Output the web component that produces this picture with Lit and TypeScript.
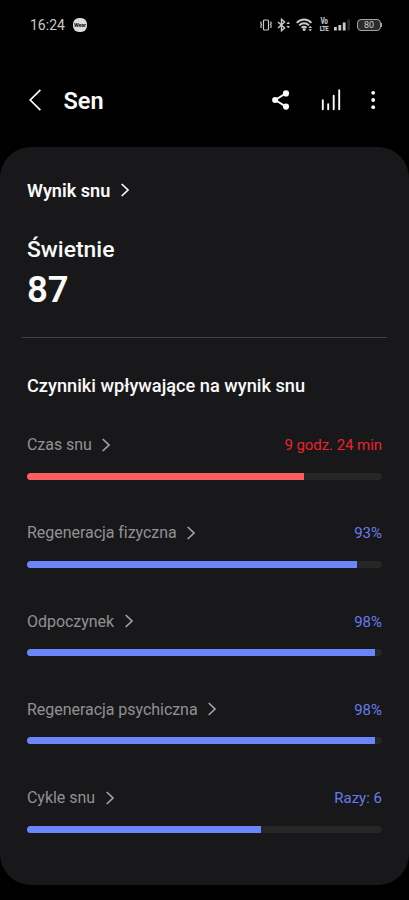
import { LitElement, html, css } from "lit";
import { customElement, property } from "lit/decorators.js";

interface Factor {
  name: string;
  value: string;
  percent: number;
  alert?: boolean;
}

const FACTORS: Factor[] = [
  { name: "Czas snu", value: "9 godz. 24 min", percent: 78, alert: true },
  { name: "Regeneracja fizyczna", value: "93%", percent: 93 },
  { name: "Odpoczynek", value: "98%", percent: 98 },
  { name: "Regeneracja psychiczna", value: "98%", percent: 98 },
  { name: "Cykle snu", value: "Razy: 6", percent: 66 },
];

const chevron = html`<svg width="10" height="14" viewBox="0 0 10 14" fill="none" stroke="currentColor" stroke-width="1.7">
  <path d="M1.7 1 L8 7 L1.7 13" />
</svg>`;

@customElement("status-bar")
export class StatusBar extends LitElement {
  static styles = css`
    :host {
      display: flex;
      align-items: center;
      height: 50px;
      padding: 0 26px 0 30px;
      color: #c9c9c9;
      font-size: 14px;
    }
    .time {
      width: 43px;
      line-height: 20px;
    }
    .wear {
      width: 14px;
      height: 14px;
      border-radius: 6px;
      background: #dcdcdc;
      color: #222;
      font-size: 5.5px;
      font-weight: 800;
      line-height: 14px;
      text-align: center;
      letter-spacing: -0.2px;
    }
    .icons {
      margin-left: auto;
      display: flex;
      align-items: center;
    }
    svg {
      display: block;
    }
    .vibrate { margin-right: 5px; }
    .bluetooth { margin-right: 5px; }
    .wifi { margin-right: 6px; }
    .volte {
      width: 10px;
      margin-right: 5px;
      font-size: 6.5px;
      font-weight: 800;
      text-align: center;
      letter-spacing: -0.4px;
      transform: scaleY(1.25);
    }
    .volte span {
      display: block;
      height: 5px;
      line-height: 5px;
    }
    .volte .lte {
      font-size: 6px;
      margin: 0 -2px;
    }
    .signal { margin-right: 6px; }
    .battery {
      box-sizing: border-box;
      width: 24px;
      height: 12px;
      border: 1px solid #a5a5a5;
      border-radius: 4px;
      background: #2b2b2b;
      font-size: 9px;
      line-height: 10px;
      text-align: center;
    }
    .tip {
      width: 1px;
      height: 4px;
      background: #a5a5a5;
      margin-right: 1px;
    }
  `;

  render() {
    return html`
      <span class="time">16:24</span>
      <span class="wear">Wear</span>
      <div class="icons">
        <svg class="vibrate" width="12" height="12" viewBox="0 0 12 12" fill="none" stroke="currentColor" stroke-width="1.2">
          <rect x="3.5" y="1" width="5" height="10" rx="1" />
          <path d="M1.2 2.6 L.8 4.2 L1.5 5.4 L.8 6.8 L1.2 9 M10.8 2.6 L11.2 4.2 L10.5 5.4 L11.2 6.8 L10.8 9" />
        </svg>
        <svg class="bluetooth" width="14" height="14" viewBox="0 0 14 14" fill="none" stroke="currentColor" stroke-width="1.4">
          <path d="M1 4 L7.6 10 L4.5 12.7 V1.3 L7.6 4 L1 10" />
          <path d="M11.2 3.7 L13 6 H9.4 Z M11.2 10.3 L13 8 H9.4 Z" fill="currentColor" stroke="none" />
        </svg>
        <svg class="wifi" width="17" height="14" viewBox="0 0 17 14" fill="none" stroke="currentColor" stroke-width="1.9">
          <path d="M.8 4.8 C4.8 .4 11.4 .4 15.4 4.8 M3.2 7.4 C5.9 4.6 10.3 4.6 13 7.4 M5.6 9.8 C7 8.3 9.2 8.3 10.6 9.8" />
          <circle cx="8.1" cy="11.6" r="1.5" fill="currentColor" stroke="none" />
          <path d="M14.2 8 L16.1 10 H12.3 Z M14.2 13.2 L16.1 11.2 H12.3 Z" fill="currentColor" stroke="none" />
        </svg>
        <div class="volte"><span>Vo</span><span class="lte">LTE</span></div>
        <svg class="signal" width="17" height="12" viewBox="0 0 17 12" fill="currentColor">
          <rect x="0" y="8" width="2.8" height="3.5" />
          <rect x="4.4" y="6" width="2.8" height="5.5" />
          <rect x="8.8" y="3.5" width="2.8" height="8" />
          <rect x="13.4" y=".5" width="2.6" height="11" fill="#2b2b2b" />
        </svg>
        <div class="battery">80</div>
        <div class="tip"></div>
      </div>
    `;
  }
}

@customElement("title-bar")
export class TitleBar extends LitElement {
  static styles = css`
    :host {
      display: flex;
      align-items: center;
      height: 97px;
      padding: 3px 33.5px 0 28px;
      box-sizing: border-box;
      color: #fafafa;
    }
    .title {
      margin: 1px 0 0 21.5px;
      font-size: 23.5px;
      font-weight: 600;
      line-height: 30px;
    }
    .share { margin-left: auto; }
    .chart { margin-left: 31px; }
    .more { margin-left: 28.5px; }
  `;

  render() {
    return html`
      <svg width="14" height="24" viewBox="0 0 14 24" fill="none" stroke="currentColor" stroke-width="1.7">
        <path d="M12.4 1.8 L2.2 12 L12.4 22.2" />
      </svg>
      <span class="title">Sen</span>
      <svg class="share" width="18" height="20" viewBox="0 0 18 20" fill="currentColor">
        <path d="M14 3.3 L3.2 10 L14 16.6" fill="none" stroke="currentColor" stroke-width="1.9" />
        <circle cx="14" cy="3.4" r="3.1" />
        <circle cx="3.1" cy="10" r="3" />
        <circle cx="14" cy="16.6" r="3.1" />
      </svg>
      <svg class="chart" width="20" height="22" viewBox="0 0 20 22" fill="none" stroke="currentColor" stroke-width="1.9" stroke-linecap="round">
        <path d="M1.8 11.2 V20.2 M7.2 15.2 V20.2 M12.7 6.8 V20.2 M18.2 1.2 V20.2" />
      </svg>
      <svg class="more" width="6" height="20" viewBox="0 0 6 20" fill="currentColor">
        <circle cx="3.2" cy="2.8" r="1.9" />
        <circle cx="3.2" cy="10" r="1.9" />
        <circle cx="3.2" cy="17.2" r="1.9" />
      </svg>
    `;
  }
}

@customElement("factor-row")
export class FactorRow extends LitElement {
  @property({ attribute: false }) factor!: Factor;

  static styles = css`
    :host {
      display: block;
      height: 88.3px;
    }
    .labels {
      display: flex;
      align-items: center;
      height: 24px;
      line-height: 24px;
    }
    .name {
      color: #919193;
      font-size: 16px;
      letter-spacing: -0.04px;
    }
    svg {
      margin: -1px 0 0 9.5px;
      color: #a2a2a4;
    }
    .value {
      margin-left: auto;
      color: #667bea;
      font-size: 15px;
    }
    .track {
      height: 7px;
      margin-top: 15.5px;
      border-radius: 4px;
      overflow: hidden;
      background: #262627;
    }
    .fill {
      height: 100%;
      background: #6b86fb;
    }
    .alert .value {
      color: #e8242b;
      letter-spacing: -0.06px;
    }
    .alert .fill { background: #fb5f5f; }
  `;

  render() {
    const f = this.factor;
    return html`
      <div class=${f.alert ? "alert" : ""}>
        <div class="labels">
          <span class="name">${f.name}</span>
          ${chevron}
          <span class="value">${f.value}</span>
        </div>
        <div class="track"><div class="fill" style="width:${f.percent}%"></div></div>
      </div>
    `;
  }
}

@customElement("app-root")
export class AppRoot extends LitElement {
  static styles = css`
    :host {
      display: block;
      height: 900px;
      overflow: hidden;
      background: #000;
      font-family: Roboto, sans-serif;
    }
    .card {
      box-sizing: border-box;
      height: 738px;
      padding: 31px 27px 0;
      border-radius: 31px;
      background: #18181a;
      color: #fafafa;
    }
    .score-link {
      display: flex;
      align-items: center;
      height: 24px;
      font-size: 18.1px;
      font-weight: 600;
    }
    .score-link svg { margin: -1px 0 0 10px; }
    .rating {
      margin-top: 33px;
      font-size: 22.9px;
      font-weight: 500;
      line-height: 30px;
    }
    .score {
      margin-top: 4px;
      font-size: 36.5px;
      font-weight: 600;
      line-height: 42px;
    }
    .divider {
      height: 1px;
      margin: 26px -5px 0;
      background: #454547;
    }
    .heading {
      margin: 36px 0 35px;
      font-size: 18.2px;
      font-weight: 500;
      line-height: 24px;
    }
  `;

  render() {
    return html`
      <status-bar></status-bar>
      <title-bar></title-bar>
      <main class="card">
        <div class="score-link"><span>Wynik snu</span>${chevron}</div>
        <div class="rating">Świetnie</div>
        <div class="score">87</div>
        <div class="divider"></div>
        <div class="heading">Czynniki wpływające na wynik snu</div>
        ${FACTORS.map((f) => html`<factor-row .factor=${f}></factor-row>`)}
      </main>
    `;
  }
}
